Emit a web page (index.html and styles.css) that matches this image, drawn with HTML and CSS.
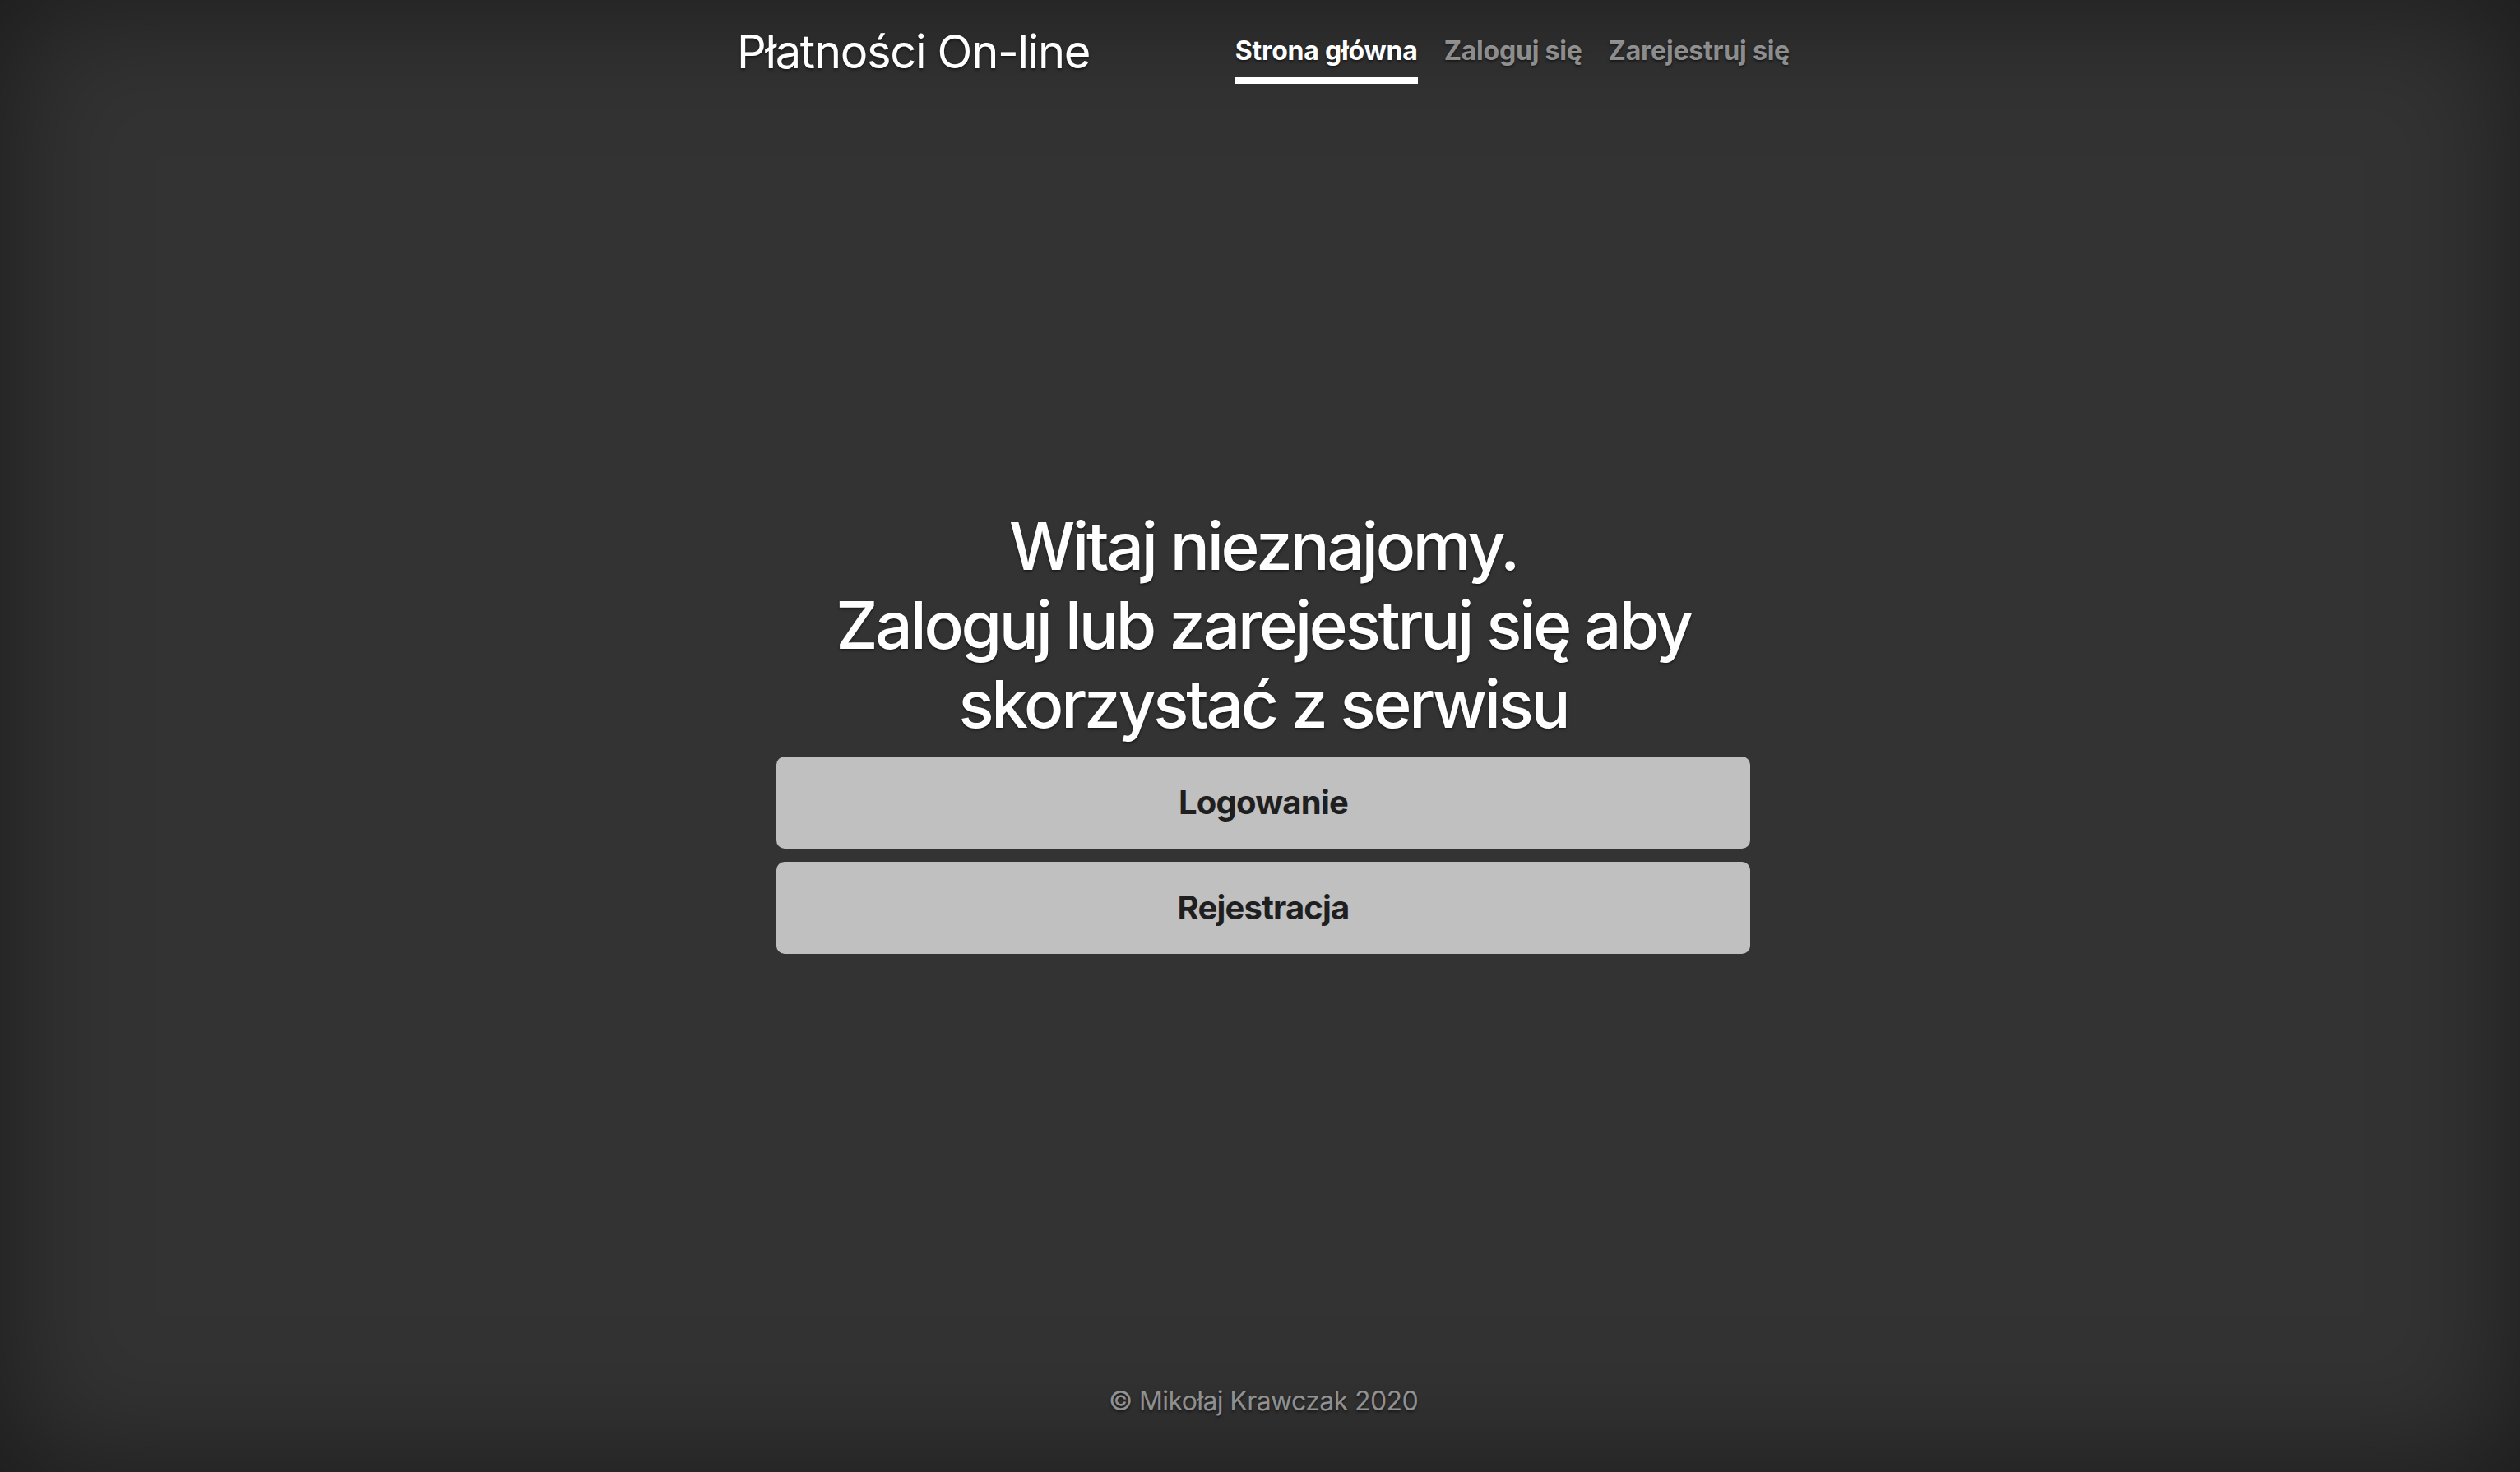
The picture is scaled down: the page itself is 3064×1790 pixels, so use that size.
FILE: index.html
```
<!DOCTYPE html>
<html lang="pl">
<head>
<meta charset="utf-8">
<title>Płatności On-line</title>
<link rel="stylesheet" href="styles.css">
</head>
<body>
<div class="cover-container">
  <header class="masthead">
    <h3 class="masthead-brand">Płatności On-line</h3>
    <nav class="nav-masthead">
      <a class="nav-link active" href="#">Strona główna</a>
      <a class="nav-link" href="#">Zaloguj się</a>
      <a class="nav-link" href="#">Zarejestruj się</a>
    </nav>
  </header>
  <main class="cover">
    <h1 class="cover-heading">Witaj nieznajomy.<br>Zaloguj lub zarejestruj się aby skorzystać z serwisu</h1>
    <div class="actions">
      <a class="btn" href="#">Logowanie</a>
      <a class="btn" href="#">Rejestracja</a>
    </div>
  </main>
  <footer class="mastfoot">
    <p>© Mikołaj Krawczak 2020</p>
  </footer>
</div>
</body>
</html>
```
FILE: styles.css
```
html, body {
  height: 100%;
  margin: 0;
  background-color: #333;
}
body {
  display: flex;
  color: #fff;
  font-family: Inter, "Noto Sans", Roboto, sans-serif;
  text-shadow: 0 1.6px 3.2px rgba(0,0,0,.5);
  box-shadow: inset 0 0 160px rgba(0,0,0,.5);
}
.cover-container {
  box-sizing: border-box;
  width: 100%;
  max-width: 1344px;
  height: 100%;
  margin: 0 auto;
  padding: 30px 28px 30px 36px;
  display: flex;
  flex-direction: column;
}
.masthead {
  display: flex;
  justify-content: space-between;
  align-items: flex-start;
  margin-bottom: auto;
}
.masthead-brand {
  margin: 0;
  font-size: 56px;
  font-weight: 400;
  line-height: 1.2;
  letter-spacing: -1.3px;
}
.nav-masthead {
  display: flex;
  gap: 32px;
}
.nav-link {
  display: block;
  padding: 8px 0;
  font-size: 32px;
  line-height: 48px;
  font-weight: 700;
  color: rgba(255,255,255,.5);
  text-decoration: none;
  border-bottom: 8px solid transparent;
  letter-spacing: -0.2px;
}
.nav-link.active {
  color: #fff;
  border-bottom-color: #fff;
}
.cover {
  padding: 0 48px;
  margin-bottom: 6px;
  text-align: center;
}
.cover-heading {
  margin: 0 0 16px;
  font-size: 80px;
  font-weight: 500;
  line-height: 96px;
  letter-spacing: -3.2px;
}
.actions {
  display: flex;
  flex-direction: column;
  gap: 16px;
}
.btn {
  display: block;
  box-sizing: border-box;
  height: 112px;
  padding: 24px 40px;
  font-size: 40px;
  line-height: 60px;
  font-weight: 700;
  color: #1f1f1f;
  background-color: #c0c0c0;
  border: 2px solid #c0c0c0;
  border-radius: 10px;
  text-decoration: none;
  text-shadow: none;
  letter-spacing: -0.8px;
}
.mastfoot {
  margin-top: auto;
  padding-bottom: 32px;
  text-align: center;
  color: rgba(255,255,255,.5);
}
.mastfoot p {
  margin: 0;
  font-size: 32px;
  line-height: 48px;
  letter-spacing: -0.6px;
}
```
